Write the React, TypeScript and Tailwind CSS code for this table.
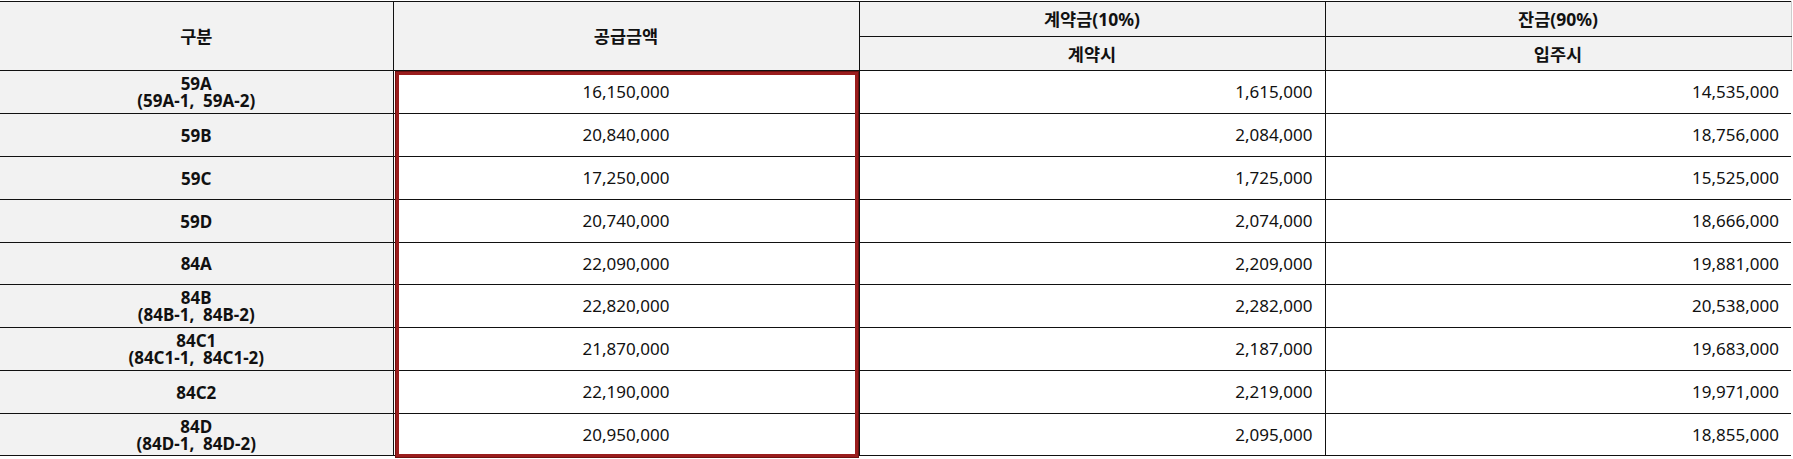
import React from "react";

type Row = { name: string; sub?: string; supply: string; deposit: string; balance: string; h: string };

const rows: Row[] = [
  { name: "59A", sub: "(59A-1,  59A-2)", supply: "16,150,000", deposit: "1,615,000", balance: "14,535,000", h: "h-[43px]" },
  { name: "59B", supply: "20,840,000", deposit: "2,084,000", balance: "18,756,000", h: "h-[43px]" },
  { name: "59C", supply: "17,250,000", deposit: "1,725,000", balance: "15,525,000", h: "h-[43px]" },
  { name: "59D", supply: "20,740,000", deposit: "2,074,000", balance: "18,666,000", h: "h-[43px]" },
  { name: "84A", supply: "22,090,000", deposit: "2,209,000", balance: "19,881,000", h: "h-[42px]" },
  { name: "84B", sub: "(84B-1,  84B-2)", supply: "22,820,000", deposit: "2,282,000", balance: "20,538,000", h: "h-[43px]" },
  { name: "84C1", sub: "(84C1-1,  84C1-2)", supply: "21,870,000", deposit: "2,187,000", balance: "19,683,000", h: "h-[43px]" },
  { name: "84C2", supply: "22,190,000", deposit: "2,219,000", balance: "19,971,000", h: "h-[43px]" },
  { name: "84D", sub: "(84D-1,  84D-2)", supply: "20,950,000", deposit: "2,095,000", balance: "18,855,000", h: "h-[42px]" },
];

export default function App() {
  return (
    <div className="w-[1793px] h-[459px] bg-white pt-px font-['Noto_Sans','Noto_Sans_CJK_KR',sans-serif] text-[#111] relative overflow-hidden">
      <table className="table-fixed border-collapse w-[1791px] text-[17px] leading-[18px]">
        <colgroup>
          <col className="w-[393px]" />
          <col className="w-[466px]" />
          <col className="w-[466px]" />
          <col className="w-[466px]" />
        </colgroup>
        <thead className="text-[17.5px]">
          <tr className="h-[35px] bg-[#f2f2f2]">
            <th rowSpan={2} className="border-y border-r border-[#111] font-bold text-center align-middle">구분</th>
            <th rowSpan={2} className="border border-[#111] font-bold text-center align-middle">공급금액</th>
            <th className="border border-[#111] font-bold text-center align-middle">계약금(10%)</th>
            <th className="border-y border-l border-[#111] border-r border-r-[#ccc] font-bold text-center align-middle">잔금(90%)</th>
          </tr>
          <tr className="h-[34px] bg-[#f2f2f2]">
            <th className="border border-[#111] font-bold text-center align-middle">계약시</th>
            <th className="border-y border-l border-[#111] border-r border-r-[#ccc] font-bold text-center align-middle">입주시</th>
          </tr>
        </thead>
        <tbody>
          {rows.map((r) => (
            <tr key={r.name} className={r.h}>
              <td className="border-y border-r border-[#111] bg-[#f2f2f2] text-center align-middle font-bold leading-[17px]">
                <div>{r.name}</div>
                {r.sub && <div className="whitespace-pre">{r.sub}</div>}
              </td>
              <td className="border border-[#111] bg-white text-center align-middle">{r.supply}</td>
              <td className="border border-[#111] bg-white text-right align-middle pr-[12px]">{r.deposit}</td>
              <td className="border-y border-l border-[#111] bg-white text-right align-middle pr-[12px]">{r.balance}</td>
            </tr>
          ))}
        </tbody>
      </table>
      <div className="absolute left-[396px] top-[72px] w-[462px] h-[385px] border-[3px] border-[#9a1d1d] shadow-[0_0_0_1px_#6e1010] pointer-events-none" />
    </div>
  );
}
